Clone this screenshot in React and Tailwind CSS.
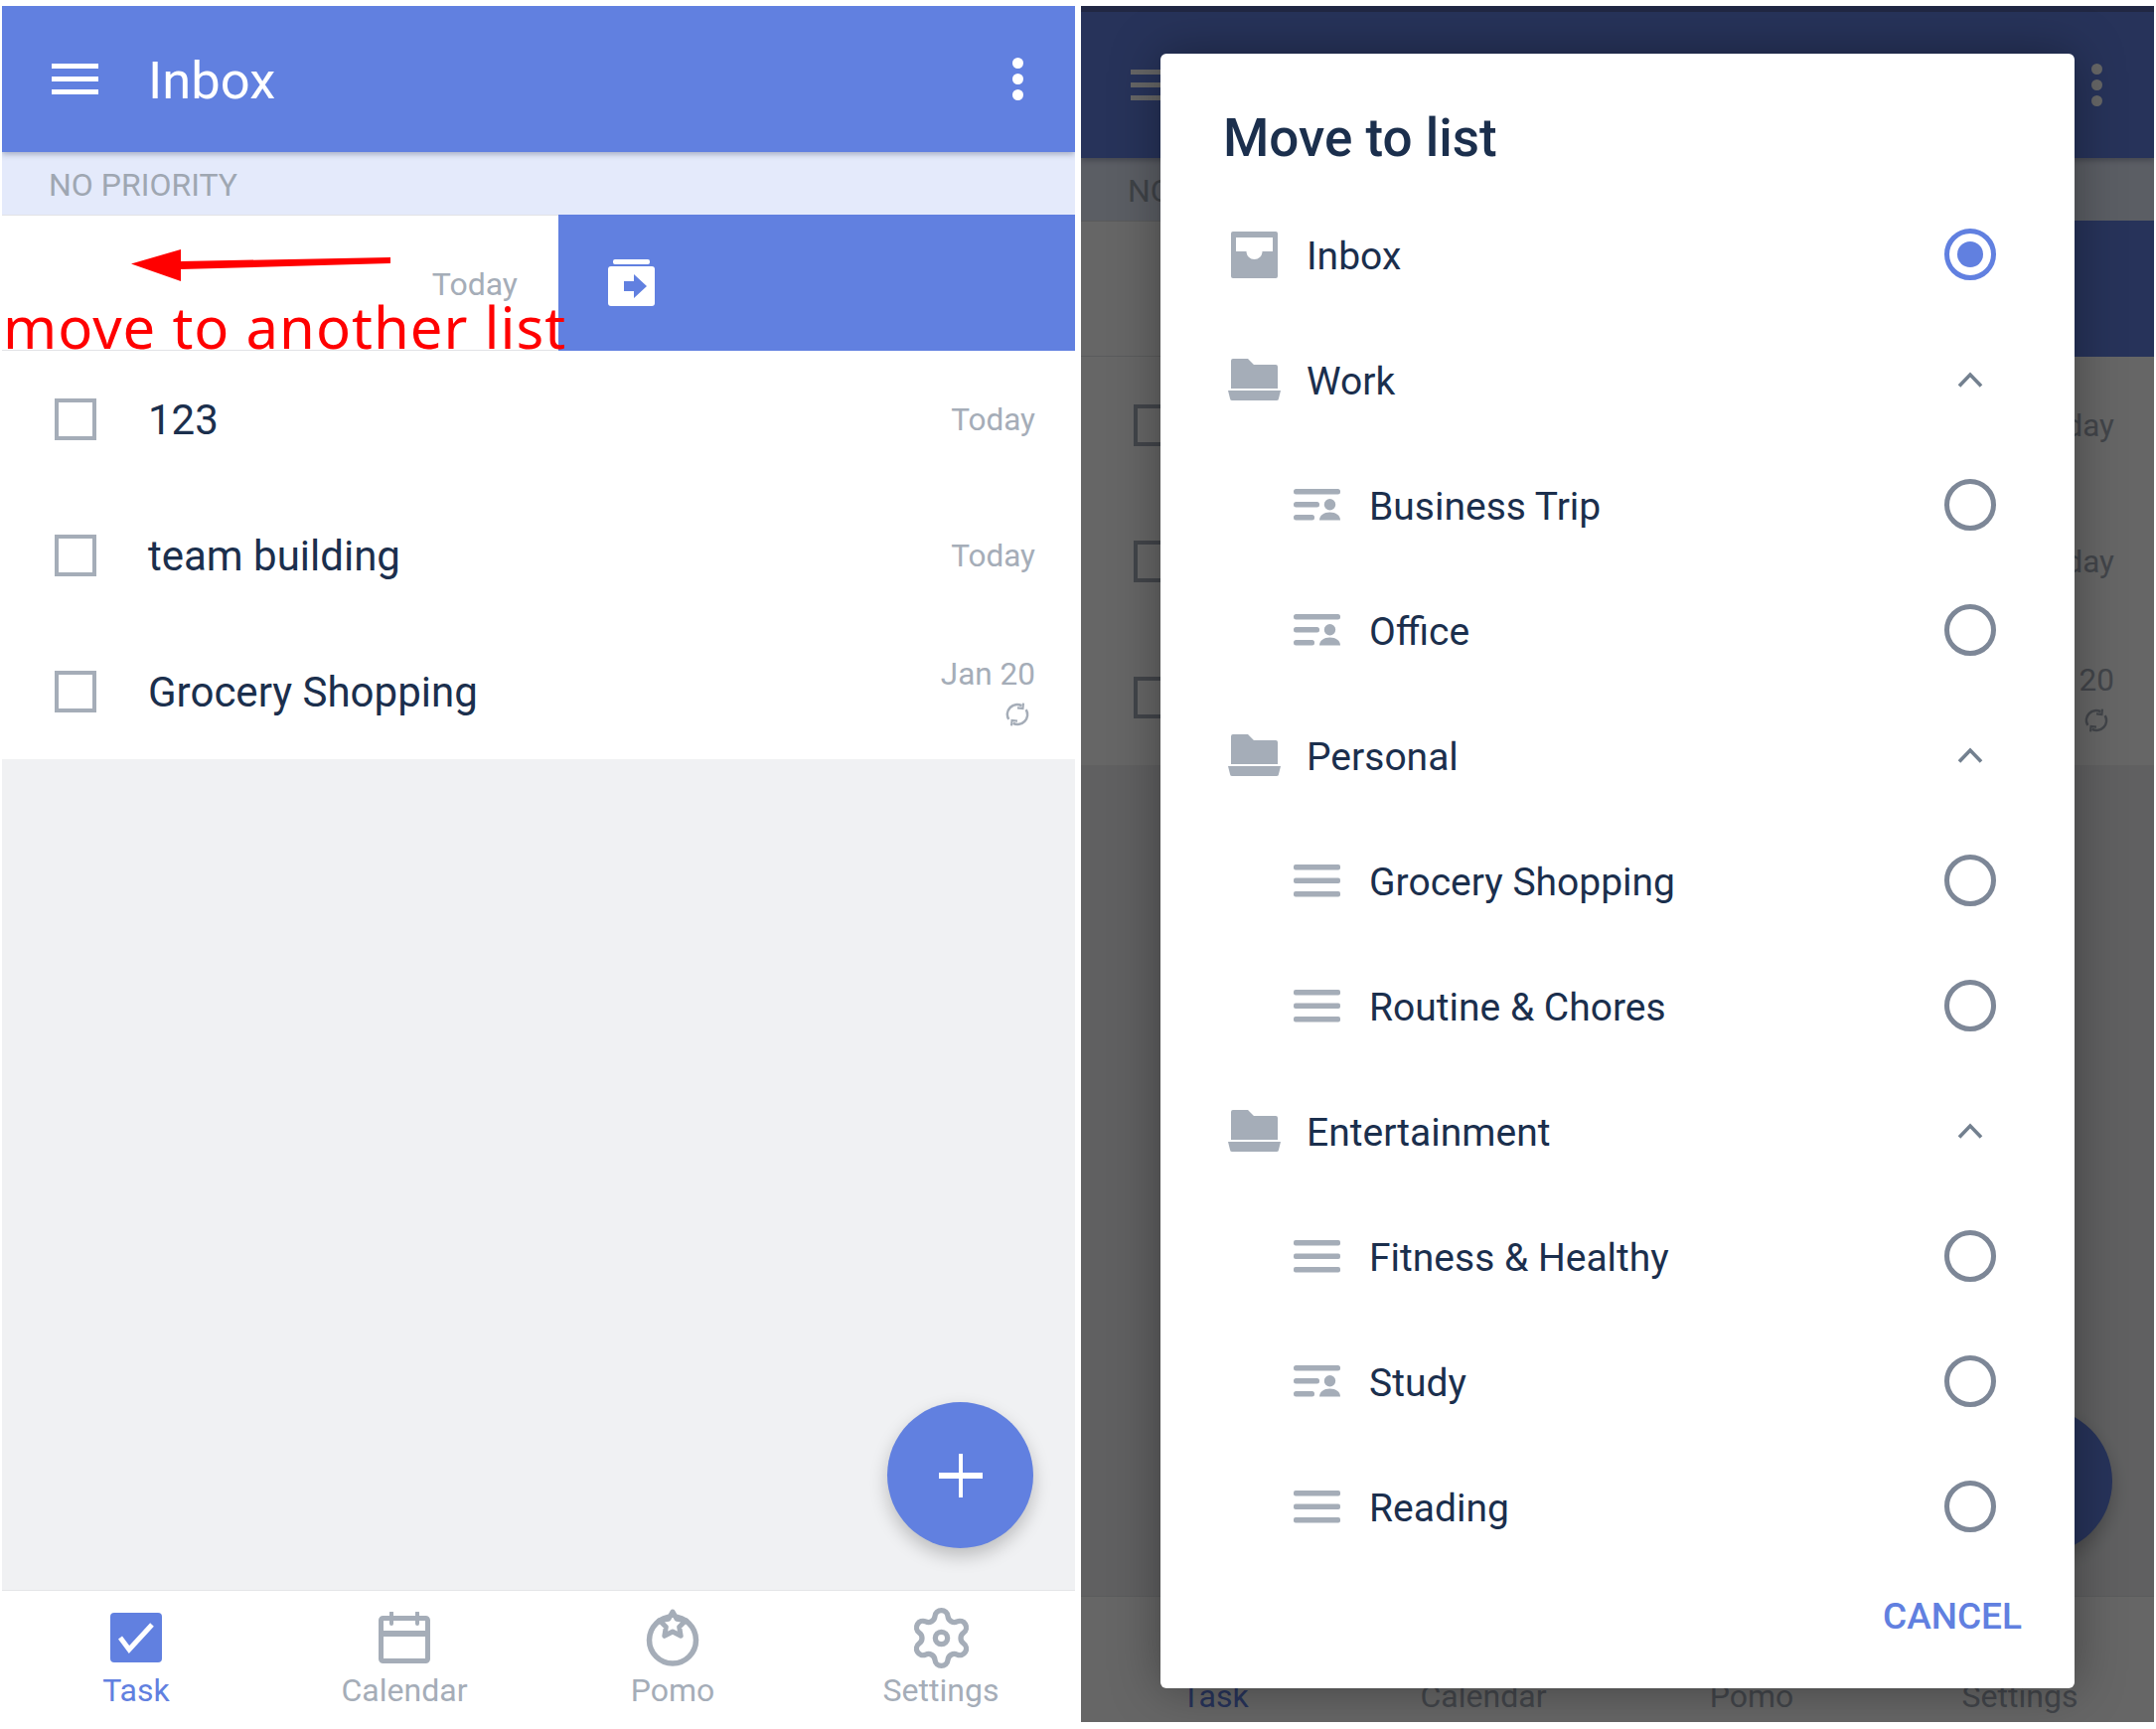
import React from "react";

function MoveIcon() {
  return (
    <svg width="47" height="47" viewBox="0 0 47 47">
      <rect x="5" y="0" width="37" height="5" rx="2" fill="#fff" />
      <rect x="0" y="7" width="47" height="40" rx="3" fill="#fff" />
      <path d="M16 22h10v-7l13 12-13 12v-7H16z" fill="#6180e0" />
    </svg>
  );
}

function Recur() {
  return (
    <svg width="24" height="24" viewBox="0 0 22 22" fill="none" stroke="#a5adb8" strokeWidth="2.4">
      <path d="M3 15.5A9 9 0 0 1 15 3" />
      <path d="M19 6.5A9 9 0 0 1 7 19" />
      <path d="M16.5 0.5l-0.5 5-5-0.5" strokeWidth="2" />
      <path d="M5.5 21.5l0.5-5 5 0.5" strokeWidth="2" />
    </svg>
  );
}

function Row({ title, date, recur }) {
  return (
    <div className="flex h-[137px] items-center justify-between bg-white pr-[40px] pl-[53px]">
      <div className="flex items-center gap-[52px]">
        <div className="h-[42px] w-[42px] border-4 border-[#a5adb8]" />
        <span className="pt-[2px] text-[42px] text-[#1b2f4d]">{title}</span>
      </div>
      <div className="flex flex-col items-end">
        <span className={"text-[31.5px] leading-[40px] text-[#a5adb8] " + (recur ? "-mt-[2px]" : "pt-[2px]")}>{date}</span>
        {recur && (
          <div className="mt-[8px] mr-[6px] flex h-[24px]">
            <Recur />
          </div>
        )}
      </div>
    </div>
  );
}

function NavItem({ label, active, children }) {
  return (
    <div className="flex flex-col items-center">
      <div className="flex h-[60px] items-center justify-center">{children}</div>
      <span className={"mt-[3px] text-[32px] leading-[40px] " + (active ? "text-[#6180e0]" : "text-[#a5adb8]")}>{label}</span>
    </div>
  );
}

function Screen() {
  return (
    <div className="relative isolate flex h-[1727px] w-[1080px] flex-col bg-[#f0f1f3]">
      <header className="relative z-10 flex h-[147px] shrink-0 items-center justify-between bg-[#6180e0] pr-[52px] pl-[50px] shadow-[0_2px_6px_rgba(60,70,100,0.4)]">
        <div className="flex items-center gap-[50px]">
          <div className="flex w-[47px] flex-col gap-[8px]">
            <div className="h-[5px] bg-white" />
            <div className="h-[5px] bg-white" />
            <div className="h-[5px] bg-white" />
          </div>
          <span className="pt-[4px] text-[52.5px] text-white">Inbox</span>
        </div>
        <div className="flex flex-col gap-[5px]">
          <div className="h-[11px] w-[11px] rounded-full bg-white" />
          <div className="h-[11px] w-[11px] rounded-full bg-white" />
          <div className="h-[11px] w-[11px] rounded-full bg-white" />
        </div>
      </header>
      <div className="flex h-[63px] shrink-0 items-center bg-[#e4eafb] pt-[2px] pl-[47px] text-[32px] text-[#9fa7b2]">NO PRIORITY</div>
      <div className="relative flex h-[137px] shrink-0">
        <div className="flex w-[560px] items-center justify-end border-t border-b border-[#e2e3e6] bg-white pt-[2px] pr-[41px]">
          <span className="text-[32px] text-[#a5adb8]">Today</span>
        </div>
        <div className="flex flex-1 items-center bg-[#6180e0] pl-[50px]">
          <MoveIcon />
        </div>
      </div>
      <Row title="123" date="Today" />
      <Row title="team building" date="Today" />
      <Row title="Grocery Shopping" date="Jan 20" recur />
      <div className="flex-1" />
      <div className="absolute right-[42px] bottom-[175px] flex h-[147px] w-[147px] items-center justify-center rounded-full bg-[#6180e0] shadow-[0_8px_18px_rgba(0,0,0,0.22)]">
        <svg width="44" height="44" viewBox="0 0 44 44">
          <rect x="20" y="0" width="4" height="44" fill="#fff" />
          <rect x="0" y="19" width="44" height="6" fill="#fff" />
        </svg>
      </div>
      <nav className="grid h-[133px] shrink-0 grid-cols-4 border-t border-[#e4e5e8] bg-white pt-[17px]">
        <NavItem label="Task" active>
          <svg width="54" height="52" viewBox="0 0 54 52">
            <rect x="1" y="1" width="52" height="50" rx="4" fill="#6180e0" />
            <path d="M11 26l9 12 23-25" fill="none" stroke="#fff" strokeWidth="5" />
          </svg>
        </NavItem>
        <NavItem label="Calendar">
          <svg width="54" height="52" viewBox="0 0 54 52" fill="none" stroke="#a5adb8" strokeWidth="5">
            <rect x="3.5" y="6.5" width="47" height="43" rx="2" />
            <path d="M3 22h48" strokeWidth="6" />
            <path d="M14 1v11M40 1v11" strokeLinecap="round" strokeWidth="4" />
          </svg>
        </NavItem>
        <NavItem label="Pomo">
          <svg width="56" height="58" viewBox="0 0 56 58" fill="none" stroke="#a5adb8" strokeWidth="5.500">
            <circle cx="28" cy="31.5" r="23.5" />
            <path d="M28 3l4.100 7.300 9.200 1.400-6.640 6.500 1.540 9.100-8.200-4.300-8.200 4.300 1.540-9.100-6.640-6.500 9.200-1.400z" fill="#fff" strokeWidth="5" strokeLinejoin="round" />
          </svg>
        </NavItem>
        <NavItem label="Settings">
          <svg width="67" height="67" viewBox="0 0 24 24" fill="none" stroke="#a5adb8" strokeWidth="1.9" strokeLinecap="round" strokeLinejoin="round">
            <path d="M9.671 4.136a2.34 2.34 0 0 1 4.659 0 2.34 2.34 0 0 0 3.319 1.915 2.34 2.34 0 0 1 2.33 4.033 2.34 2.34 0 0 0 0 3.831 2.34 2.34 0 0 1-2.33 4.033 2.34 2.34 0 0 0-3.319 1.915 2.34 2.34 0 0 1-4.659 0 2.34 2.34 0 0 0-3.32-1.915 2.34 2.34 0 0 1-2.33-4.033 2.34 2.34 0 0 0 0-3.831A2.34 2.34 0 0 1 6.35 6.051a2.34 2.34 0 0 0 3.319-1.915" />
            <circle cx="12" cy="12" r="2.2" />
          </svg>
        </NavItem>
      </nav>
    </div>
  );
}

function InboxIcon() {
  return (
    <svg width="53" height="47" viewBox="0 0 53 47">
      <rect x="3" y="0" width="47" height="47" rx="2" fill="#a5adb8" />
      <path d="M8 6h37v14H34.500a8 8 0 0 1-16 0H8z" fill="#fff" />
    </svg>
  );
}
function FolderIcon() {
  return (
    <svg width="53" height="42" viewBox="0 0 53 42">
      <path d="M3 2a2 2 0 0 1 2-2h15l6 6h22a2 2 0 0 1 2 2v22H3z" fill="#a5adb8" />
      <path d="M0 32h53l-2 8a2 2 0 0 1-2 2H4a2 2 0 0 1-2-2z" fill="#a5adb8" />
    </svg>
  );
}
function LinesIcon() {
  return (
    <svg width="47" height="33" viewBox="0 0 47 33" fill="#a5adb8">
      <rect x="0" y="0" width="47" height="5.500" rx="2" />
      <rect x="0" y="13.500" width="47" height="5.500" rx="2" />
      <rect x="0" y="27" width="47" height="5.500" rx="2" />
    </svg>
  );
}
function PersonListIcon() {
  return (
    <svg width="47" height="33" viewBox="0 0 47 33" fill="#a5adb8">
      <rect x="0" y="0" width="47" height="5.500" rx="2.500" />
      <rect x="0" y="13" width="26" height="5.500" rx="2.500" />
      <rect x="0" y="26" width="21" height="5.500" rx="2.500" />
      <circle cx="36.500" cy="15.800" r="5.700" />
      <path d="M26 31.500c0-5 4.500-8 10.500-8s10.500 3 10.500 8z" />
    </svg>
  );
}

function Radio({ on }) {
  return on ? (
    <div className="flex h-[52px] w-[52px] items-center justify-center rounded-full border-[5px] border-[#6180e0]">
      <div className="h-[26px] w-[26px] rounded-full bg-[#6180e0]" />
    </div>
  ) : (
    <div className="h-[52px] w-[52px] rounded-full border-[5px] border-[#7d8797]" />
  );
}

function Chevron() {
  return (
    <div className="flex h-[52px] w-[52px] items-center justify-center">
      <svg width="26" height="16" viewBox="0 0 26 16" fill="none" stroke="#73808f" strokeWidth="3.600">
        <path d="M2 14.500L13 3l11 11.500" />
      </svg>
    </div>
  );
}

function Group({ label, children, right }) {
  return (
    <div className="flex h-[126px] items-center justify-between pr-[79px] pl-[68px]">
      <div className="flex items-center gap-[26px]">
        {children}
        <span className="pt-[5px] text-[39px] text-[#1b2f4d]">{label}</span>
      </div>
      {right}
    </div>
  );
}

function Sub({ label, person }) {
  return (
    <div className="flex h-[126px] items-center justify-between pr-[79px] pl-[134px]">
      <div className="flex items-center gap-[29px]">
        {person ? <PersonListIcon /> : <LinesIcon />}
        <span className="pt-[5px] text-[39px] text-[#1b2f4d]">{label}</span>
      </div>
      <Radio />
    </div>
  );
}

function Modal() {
  return (
    <div className="absolute top-[48px] left-[80px] flex h-[1645px] w-[920px] flex-col rounded-[6px] bg-white shadow-[0_0_50px_rgba(0,0,0,0.35)]">
      <div className="flex h-[139px] items-center pt-[32px] pl-[63px] text-[53px] font-medium text-[#1b2f4d]">Move to list</div>
      <Group label="Inbox" right={<Radio on />}><InboxIcon /></Group>
      <Group label="Work" right={<Chevron />}><FolderIcon /></Group>
      <Sub label="Business Trip" person />
      <Sub label="Office" person />
      <Group label="Personal" right={<Chevron />}><FolderIcon /></Group>
      <Sub label="Grocery Shopping" />
      <Sub label="Routine & Chores" />
      <Group label="Entertainment" right={<Chevron />}><FolderIcon /></Group>
      <Sub label="Fitness & Healthy" />
      <Sub label="Study" person />
      <Sub label="Reading" />
      <div className="flex h-[96px] items-center justify-end pr-[53px] text-[37px] font-medium text-[#6180e0]">CANCEL</div>
    </div>
  );
}

export default function App() {
  return (
    <div className="flex h-[1740px] w-[2170px] bg-white pt-[6px] pl-[2px] [font-family:Roboto,sans-serif]">
      <div className="relative h-[1727px] w-[1080px] overflow-hidden">
        <Screen />
        <svg className="absolute top-[238px] left-[126px]" width="270" height="44" viewBox="0 0 270 44">
          <path d="M4 21.500L54 7v12l211-4v6L54 27v12z" fill="#ff0000" />
        </svg>
        <span className="absolute top-[283px] left-[1px] text-[58px] leading-[80px] tracking-[1px] whitespace-nowrap text-[#ff0000] [font-family:'Noto_Sans',sans-serif]">move to another list</span>
      </div>
      <div className="relative ml-[6px] h-[1727px] w-[1080px] overflow-hidden">
        <div className="h-[6px] bg-[#5565ad]" />
        <Screen />
        <div className="absolute inset-0 bg-black/60" />
        <Modal />
      </div>
    </div>
  );
}
